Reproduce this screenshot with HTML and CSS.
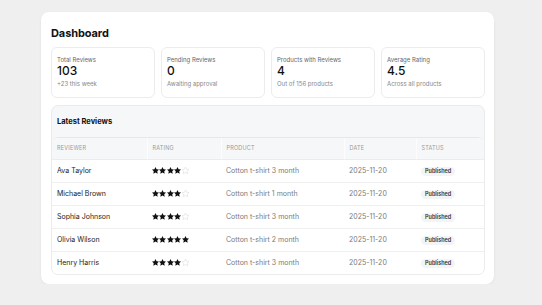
FILE: index.html
```html
<!DOCTYPE html>
<html>
<head>
<meta charset="utf-8">
<link rel="stylesheet" href="styles.css">
</head>
<body>
<svg class="defs" width="0" height="0" aria-hidden="true">
  <defs>
    <path id="star" d="M12 2l3.09 6.26L22 9.27l-5 4.87 1.18 6.88L12 17.77l-6.18 3.25L7 14.14 2 9.27l6.91-1.01L12 2z"/>
  </defs>
</svg>
<div class="page">
  <main class="card">
    <h1 class="title">Dashboard</h1>
    <div class="stats">
      <div class="stat">
        <div class="stat-label">Total Reviews</div>
        <div class="stat-value">103</div>
        <div class="stat-sub">+23 this week</div>
      </div>
      <div class="stat">
        <div class="stat-label">Pending Reviews</div>
        <div class="stat-value">0</div>
        <div class="stat-sub">Awaiting approval</div>
      </div>
      <div class="stat">
        <div class="stat-label">Products with Reviews</div>
        <div class="stat-value">4</div>
        <div class="stat-sub">Out of 156 products</div>
      </div>
      <div class="stat">
        <div class="stat-label">Average Rating</div>
        <div class="stat-value">4.5</div>
        <div class="stat-sub">Across all products</div>
      </div>
    </div>
    <section class="reviews">
      <h2 class="reviews-title">Latest Reviews</h2>
      <div class="table-wrap">
        <table class="table">
          <thead>
            <tr>
              <th class="c1">Reviewer</th>
              <th class="c2">Rating</th>
              <th class="c3">Product</th>
              <th class="c4">Date</th>
              <th class="c5">Status</th>
            </tr>
          </thead>
          <tbody>
            <tr>
              <td class="name">Ava Taylor</td>
              <td><span class="stars"><svg class="on" viewBox="2 2 20 20"><use href="#star"/></svg><svg class="on" viewBox="2 2 20 20"><use href="#star"/></svg><svg class="on" viewBox="2 2 20 20"><use href="#star"/></svg><svg class="on" viewBox="2 2 20 20"><use href="#star"/></svg><svg class="off" viewBox="2 2 20 20"><use href="#star"/></svg></span></td>
              <td class="muted">Cotton t-shirt 3 month</td>
              <td class="muted">2025-11-20</td>
              <td><span class="badge">Published</span></td>
            </tr>
            <tr>
              <td class="name">Michael Brown</td>
              <td><span class="stars"><svg class="on" viewBox="2 2 20 20"><use href="#star"/></svg><svg class="on" viewBox="2 2 20 20"><use href="#star"/></svg><svg class="on" viewBox="2 2 20 20"><use href="#star"/></svg><svg class="on" viewBox="2 2 20 20"><use href="#star"/></svg><svg class="off" viewBox="2 2 20 20"><use href="#star"/></svg></span></td>
              <td class="muted">Cotton t-shirt 1 month</td>
              <td class="muted">2025-11-20</td>
              <td><span class="badge">Published</span></td>
            </tr>
            <tr>
              <td class="name">Sophia Johnson</td>
              <td><span class="stars"><svg class="on" viewBox="2 2 20 20"><use href="#star"/></svg><svg class="on" viewBox="2 2 20 20"><use href="#star"/></svg><svg class="on" viewBox="2 2 20 20"><use href="#star"/></svg><svg class="on" viewBox="2 2 20 20"><use href="#star"/></svg><svg class="off" viewBox="2 2 20 20"><use href="#star"/></svg></span></td>
              <td class="muted">Cotton t-shirt 3 month</td>
              <td class="muted">2025-11-20</td>
              <td><span class="badge">Published</span></td>
            </tr>
            <tr>
              <td class="name">Olivia Wilson</td>
              <td><span class="stars"><svg class="on" viewBox="2 2 20 20"><use href="#star"/></svg><svg class="on" viewBox="2 2 20 20"><use href="#star"/></svg><svg class="on" viewBox="2 2 20 20"><use href="#star"/></svg><svg class="on" viewBox="2 2 20 20"><use href="#star"/></svg><svg class="on" viewBox="2 2 20 20"><use href="#star"/></svg></span></td>
              <td class="muted">Cotton t-shirt 2 month</td>
              <td class="muted">2025-11-20</td>
              <td><span class="badge">Published</span></td>
            </tr>
            <tr>
              <td class="name">Henry Harris</td>
              <td><span class="stars"><svg class="on" viewBox="2 2 20 20"><use href="#star"/></svg><svg class="on" viewBox="2 2 20 20"><use href="#star"/></svg><svg class="on" viewBox="2 2 20 20"><use href="#star"/></svg><svg class="on" viewBox="2 2 20 20"><use href="#star"/></svg><svg class="off" viewBox="2 2 20 20"><use href="#star"/></svg></span></td>
              <td class="muted">Cotton t-shirt 3 month</td>
              <td class="muted">2025-11-20</td>
              <td><span class="badge">Published</span></td>
            </tr>
          </tbody>
        </table>
      </div>
    </section>
  </main>
</div>
</body>
</html>
```
FILE: styles.css
```css
* { box-sizing: border-box; }
html, body { margin: 0; padding: 0; }
body {
  background: #efefef;
  font-family: Inter, "Liberation Sans", sans-serif;
  color: #111;
}
.defs { position: absolute; width: 0; height: 0; }
.page {
  padding: 12px 0 0 41px;
}
.card {
  width: 453px;
  background: #fff;
  border-radius: 8px;
  box-shadow: 0 1px 3px rgba(0,0,0,0.06);
  padding: 14px 9px 9px 10px;
}
.title {
  margin: 0 0 7px 0;
  font-size: 11px;
  line-height: 14px;
  font-weight: 700;
  letter-spacing: -0.1px;
}
.stats {
  display: grid;
  grid-template-columns: repeat(4, 1fr);
  gap: 6px;
}
.stat {
  height: 51px;
  border: 1px solid #ececec;
  border-radius: 6px;
  padding: 8px 5px 0 5px;
}
.stat-label {
  font-size: 6px;
  line-height: 8px;
  color: #666;
}
.stat-value {
  font-size: 12px;
  line-height: 14px;
  font-weight: 500;
}
.stat-sub {
  font-size: 6px;
  line-height: 8px;
  color: #888;
  margin-top: 2px;
}
.reviews {
  margin-top: 7px;
  background: #f6f7f8;
  border: 1px solid #ebebeb;
  border-radius: 7px;
}
.reviews-title {
  margin: 0;
  padding: 11px 5px 0 5px;
  height: 31px;
  font-size: 7.5px;
  line-height: 9px;
  font-weight: 700;
}
.table-wrap {
  background: #fff;
  border-top: 1px solid #e8e8e8;
  border-radius: 6px;
  overflow: hidden;
}
.table {
  width: 100%;
  border-collapse: collapse;
  table-layout: fixed;
}
.c1 { width: 95px; }
.c2 { width: 74px; }
.c3 { width: 123px; }
.c4 { width: 72px; }
.c5 { width: auto; }
.table th {
  background: #f6f7f8;
  text-align: left;
  font-weight: 400;
  font-size: 5.5px;
  letter-spacing: 0.2px;
  text-transform: uppercase;
  color: #9a9a9a;
  height: 21px;
  padding: 0 5px;
  border-right: 1px solid #fdfdfd;
  border-bottom: 1px solid #ececec;
}
.table th:last-child { border-right: 0; }
.table td {
  height: 23px;
  padding: 0 5px;
  font-size: 7px;
  border-bottom: 1px solid #efefef;
  white-space: nowrap;
}
.table tbody tr:last-child td { border-bottom: 0; }
.name { color: #222; }
.muted { color: #7a7a7a; }
.stars {
  display: flex;
  gap: 0.4px;
}
.stars svg {
  width: 7px;
  height: 7px;
  display: block;
}
.stars .on { fill: #111; }
.stars .off { fill: none; stroke: #d8d8d8; stroke-width: 1.5; }
.badge {
  display: inline-block;
  background: #f3f4f5;
  border-radius: 5px;
  padding: 2px 4px;
  font-size: 5.5px;
  line-height: 5px;
  font-weight: 600;
  color: #333;
}
```
